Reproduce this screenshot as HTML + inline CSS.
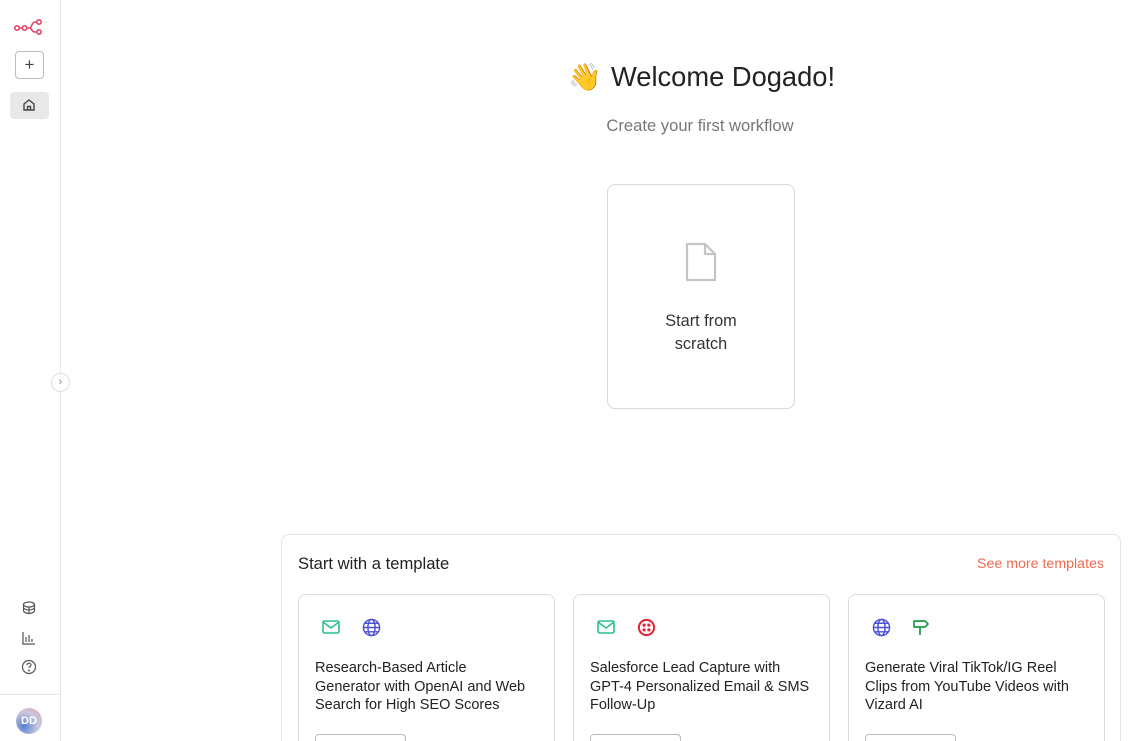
<!DOCTYPE html>
<html style="width:1139px;height:741px;overflow:hidden"><head><style>
*{box-sizing:border-box;margin:0;padding:0}
body{width:1139px;height:741px;overflow:hidden;background:#fff;font-family:"Liberation Sans",sans-serif;color:#222;position:relative}
.side{position:absolute;left:0;top:0;width:61px;height:741px;border-right:1px solid #e6e6e6;background:#fff}
.ab{position:absolute}
.card{position:absolute;left:607px;top:184px;width:188px;height:225px;border:1px solid #d9d9d9;border-radius:8px;background:#fff;text-align:center}
.panel{position:absolute;left:281px;top:534px;width:840px;height:207px;border:1px solid #e3e3e3;border-bottom:none;border-radius:8px 8px 0 0;background:#fff}
.tc{position:absolute;top:59px;width:257px;height:148px;border:1px solid #dcdcdc;border-bottom:none;border-radius:8px 8px 0 0;background:#fff;overflow:hidden}
.tc .ic{position:absolute;top:16px;width:32px;height:32px;display:flex;align-items:center;justify-content:center}
.tc .t{position:absolute;left:16px;top:64px;width:240px;font-size:14.5px;line-height:18.5px;color:#222;white-space:nowrap}
.tc .b{position:absolute;left:16px;top:139px;width:91px;height:20px;border:1px solid #bbb;border-radius:4px}
</style></head><body>
<div style="position:absolute;left:0;top:0;width:1139px;height:741px;overflow:hidden">
<div class="side">
  <svg class="ab" style="left:14px;top:18px" width="30" height="18" viewBox="0 0 30 18" fill="none" stroke="#e0466b" stroke-width="1.6">
    <circle cx="3" cy="10" r="2.2"/><circle cx="10.5" cy="10" r="2.2"/><circle cx="25" cy="4" r="2.2"/><circle cx="25" cy="14" r="2.2"/>
    <path d="M5.2 10h3M12.7 10h3c2 0 2-6 5-6h2M15.7 10c2 0 2 4 5 4h2"/>
  </svg>
  <div class="ab" style="left:15px;top:51px;width:29px;height:28px;border:1px solid #bbb;border-radius:4px;text-align:center;line-height:25px;font-size:17px;color:#444">+</div>
  <div class="ab" style="left:10px;top:92px;width:39px;height:27px;background:#e8e8e8;border-radius:4px"></div>
  <svg class="ab" style="left:22px;top:98px" width="14" height="14" viewBox="0 0 14 14" fill="none" stroke="#444" stroke-width="1.4"><path d="M2 6l5-4 5 4v6H2z M5.5 12V8.5h3V12"/></svg>
  <svg class="ab" style="left:21px;top:600px" width="16" height="16" viewBox="0 0 16 16" fill="none" stroke="#555" stroke-width="1.2"><ellipse cx="8" cy="4.5" rx="5.5" ry="2.5"/><path d="M2.5 4.5v6c0 1.5 2.5 3 5.5 3s5.5-1.5 5.5-3v-6M2.5 8c1.5 1.5 3.5 2 5.5 2s4-.5 5.5-2M8 7v6.5"/></svg>
  <svg class="ab" style="left:21px;top:630px" width="16" height="16" viewBox="0 0 16 16" fill="none" stroke="#555" stroke-width="1.2"><path d="M2 2v12h12M5 12V7M8 12V5M11 12V9"/></svg>
  <svg class="ab" style="left:21px;top:659px" width="16" height="16" viewBox="0 0 16 16" fill="none" stroke="#555" stroke-width="1.2"><circle cx="8" cy="8" r="6.5"/><path d="M6 6.2c0-1.2 1-2 2-2s2 .8 2 1.8c0 1.5-2 1.5-2 3"/><circle cx="8" cy="11.5" r=".4" fill="#555"/></svg>
  <div class="ab" style="left:0;top:694px;width:61px;border-top:1px solid #e6e6e6"></div>
  <div class="ab" style="left:16px;top:708px;width:26px;height:26px;border-radius:50%;background:radial-gradient(circle at 30% 70%,#5a7fd6,#c9c9dd 55%,#e4a0a8);color:#fff;font-size:11px;font-weight:bold;text-align:center;line-height:26px">DD</div>
</div>
<div class="ab" style="left:51px;top:373px;width:19px;height:19px;border:1px solid #ddd;border-radius:50%;background:#fff;text-align:center;font-size:11px;line-height:16px;color:#888">›</div>

<div class="ab" style="left:568px;top:58px;font-size:27px;line-height:38px">👋</div>
<div class="ab" style="left:611px;top:58px;font-size:27.3px;line-height:38px;color:#222">Welcome Dogado!</div>
<div class="ab" style="left:0;width:1400px;top:116px;text-align:center;font-size:16.6px;color:#777">Create your first workflow</div>

<div class="card">
  <svg style="position:absolute;left:75px;top:55px" width="36" height="44" viewBox="0 0 36 44" fill="none" stroke="#c4c4c4" stroke-width="2.2" stroke-linejoin="round"><path d="M4 4h18l10 10v26H4z M22 4v10h10"/></svg>
  <div style="position:absolute;left:0;right:0;top:125px;font-size:16.3px;line-height:23px;color:#333">Start from<br>scratch</div>
</div>

<div class="panel">
  <div class="ab" style="left:16px;top:19px;font-size:16.6px;color:#222">Start with a template</div>
  <div class="ab" style="right:16px;top:21px;font-size:14.2px;color:#ee6b52">See more templates</div>
  <div class="tc" style="left:16px">
    <div class="ic" style="left:16px"><svg width="18" height="14" viewBox="0 0 18 14" fill="none" stroke="#2dbf8d" stroke-width="1.6"><rect x="1" y="1" width="16" height="12" rx="1.5"/><path d="M1 2l8 6 8-6"/></svg></div>
    <div class="ic" style="left:56px"><svg width="19" height="19" viewBox="0 0 20 20" fill="none" stroke="#4a4fd6" stroke-width="1.5"><circle cx="10" cy="10" r="8.5"/><ellipse cx="10" cy="10" rx="3.8" ry="8.5"/><path d="M1.5 10h17M3 5.5h14M3 14.5h14"/></svg></div>
    <div class="t">Research-Based Article<br>Generator with OpenAI and Web<br>Search for High SEO Scores</div>
    <div class="b"></div>
  </div>
  <div class="tc" style="left:291px">
    <div class="ic" style="left:16px"><svg width="18" height="14" viewBox="0 0 18 14" fill="none" stroke="#2dbf8d" stroke-width="1.6"><rect x="1" y="1" width="16" height="12" rx="1.5"/><path d="M1 2l8 6 8-6"/></svg></div>
    <div class="ic" style="left:56px"><svg width="19" height="19" viewBox="0 0 20 20"><circle cx="10" cy="10" r="8" fill="none" stroke="#e0283a" stroke-width="2.2"/><circle cx="7.5" cy="7.5" r="1.7" fill="#e0283a"/><circle cx="12.5" cy="7.5" r="1.7" fill="#e0283a"/><circle cx="7.5" cy="12.5" r="1.7" fill="#e0283a"/><circle cx="12.5" cy="12.5" r="1.7" fill="#e0283a"/></svg></div>
    <div class="t">Salesforce Lead Capture with<br>GPT-4 Personalized Email &amp; SMS<br>Follow-Up</div>
    <div class="b"></div>
  </div>
  <div class="tc" style="left:566px">
    <div class="ic" style="left:16px"><svg width="19" height="19" viewBox="0 0 20 20" fill="none" stroke="#4a4fd6" stroke-width="1.5"><circle cx="10" cy="10" r="8.5"/><ellipse cx="10" cy="10" rx="3.8" ry="8.5"/><path d="M1.5 10h17M3 5.5h14M3 14.5h14"/></svg></div>
    <div class="ic" style="left:56px"><svg width="18" height="18" viewBox="0 0 18 18" fill="none" stroke="#1f9a4a" stroke-width="1.7" stroke-linejoin="round"><path d="M2 3h11l3 3-3 3H2z M8 9v8"/></svg></div>
    <div class="t">Generate Viral TikTok/IG Reel<br>Clips from YouTube Videos with<br>Vizard AI</div>
    <div class="b"></div>
  </div>
</div>
</div>
</body></html>
